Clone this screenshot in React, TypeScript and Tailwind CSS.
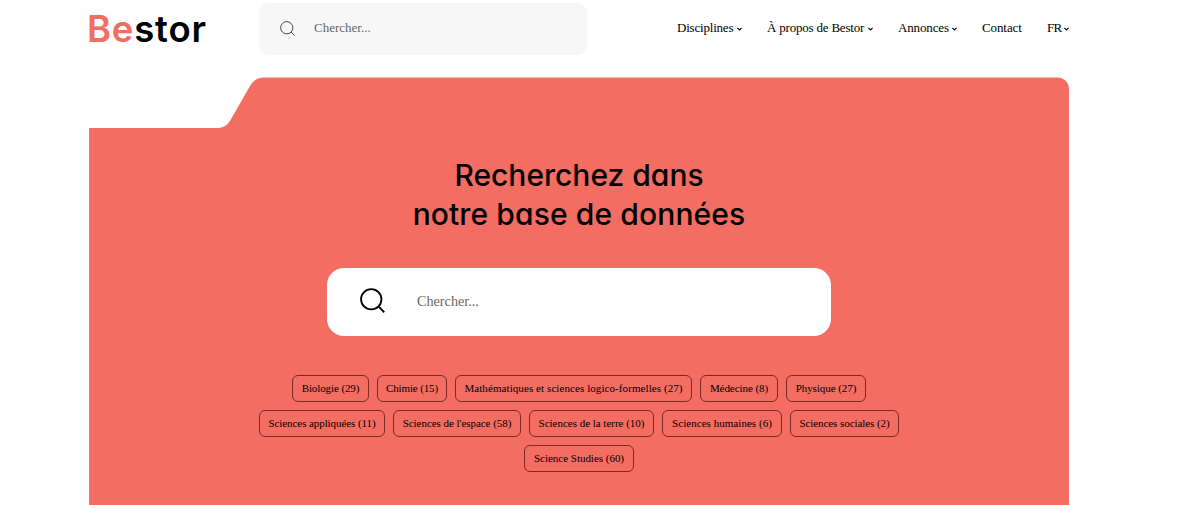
import React, { useState } from "react";

const navItems = [
  { label: "Disciplines", width: "w-[90px]", spacing: "tracking-[-0.2px]", gap: "gap-1", hasMenu: true },
  { label: "À propos de Bestor", width: "w-[131px]", spacing: "tracking-[-0.2px]", gap: "gap-1", hasMenu: true },
  { label: "Annonces", width: "w-[84px]", spacing: "tracking-[-0.15px]", gap: "gap-[3px]", hasMenu: true },
  { label: "Contact", width: "w-[65px]", spacing: "tracking-[-0.1px]", gap: "gap-1", hasMenu: false },
  { label: "FR", width: "w-[22px]", spacing: "tracking-[-0.7px]", gap: "gap-[2px]", hasMenu: true },
];

const tagRows = [
  [
    { label: "Biologie (29)", width: "w-[77px]", spacing: "tracking-[-0.1px]" },
    { label: "Chimie (15)", width: "w-[70px]", spacing: "tracking-[-0.15px]" },
    {
      label: "Mathématiques et sciences logico-formelles (27)",
      width: "w-[237px]",
      spacing: "tracking-[0.08px]",
    },
    { label: "Médecine (8)", width: "w-[78px]", spacing: "tracking-[-0.06px]" },
    { label: "Physique (27)", width: "w-[80px]", spacing: "tracking-[-0.06px]" },
  ],
  [
    { label: "Sciences appliquées (11)", width: "w-[126px]", spacing: "tracking-[-0.08px]" },
    { label: "Sciences de l'espace (58)", width: "w-[128px]", spacing: "tracking-[-0.05px]" },
    { label: "Sciences de la terre (10)", width: "w-[125px]", spacing: "tracking-[-0.02px]" },
    { label: "Sciences humaines (6)", width: "w-[120px]", spacing: "tracking-[0.04px]" },
    { label: "Sciences sociales (2)", width: "w-[109px]", spacing: "tracking-[-0.07px]" },
  ],
  [{ label: "Science Studies (60)", width: "w-[110px]", spacing: "tracking-[-0.02px]" }],
];

function SearchIcon({ className, stroke }: { className: string; stroke: number }) {
  return (
    <svg className={className} viewBox="0 0 26 26" fill="none" stroke="currentColor" strokeWidth={stroke}>
      <circle cx="11.7" cy="11.7" r="10.6" />
      <path d="M19.2 19.2L25.2 25.2" />
    </svg>
  );
}

function Chevron() {
  return (
    <svg
      className="mt-px h-[4px] w-[5px] shrink-0"
      viewBox="0 0 5 4"
      fill="none"
      stroke="currentColor"
      strokeWidth="1.1"
    >
      <path d="M0.4 0.8L2.5 2.9L4.6 0.8" />
    </svg>
  );
}

export default function App() {
  const [navSearch, setNavSearch] = useState("");
  const [search, setSearch] = useState("");

  return (
    <div className="h-[505px] overflow-hidden bg-white text-black font-['Liberation_Serif',serif]">
      <div className="ml-[89px] w-[980px]">
        <header className="flex h-[77px]">
          <div className="-ml-[2px] w-[172px] pt-[7px] whitespace-nowrap font-['Inter',sans-serif] font-[560] text-[36.5px] leading-[44px] tracking-[0.8px]">
            <span className="text-[#f46d62]">Be</span>stor
          </div>
          <div className="mt-[3px] flex h-[52px] w-[328px] items-center rounded-[9px] bg-[#f7f7f7] pl-[21px]">
            <SearchIcon className="mb-[2px] size-[15px] text-[#444]" stroke={1.7} />
            <input
              type="text"
              placeholder="Chercher..."
              className="mb-[2px] ml-[19px] w-[240px] bg-transparent text-[13px] leading-4 outline-none placeholder:text-[#666]"
              value={navSearch}
              onChange={(e) => setNavSearch(e.target.value)}
            />
          </div>
          <nav className="ml-[90px] flex h-[56px] items-center text-[13px]">
            {navItems.map((item) => (
              <a
                key={item.label}
                className={`${item.width} ${item.gap} flex shrink-0 items-center whitespace-nowrap`}
              >
                <span className={item.spacing}>{item.label}</span>
                {item.hasMenu && <Chevron />}
              </a>
            ))}
          </nav>
        </header>

        <main>
          {/* Folder tab on top of the panel */}
          <svg className="block h-[51px] w-[980px]" viewBox="0 0 980 51" fill="#f46d62">
            <path d="M0 50.9H129C135 50.9 138.500 48 141.500 43L161 9C164.500 3.500 168 0.5 175 0.5H968.500C975 0.5 980 5.500 980 12V51H0Z" />
          </svg>

          <section className="flex h-[377px] flex-col items-center bg-[#f46d62]">
            <h1 className="mt-[28px] text-center font-['Inter',sans-serif] text-[30px] font-medium leading-[39px] [font-feature-settings:'cv11']">
              <span>Recherchez dans</span>
              <br />
              <span className="tracking-[0.12px]">notre base de données</span>
            </h1>
            <div className="mt-[34px] flex h-[68px] w-[504px] items-center rounded-[17px] bg-white pl-[33px]">
              <SearchIcon className="mb-[3px] size-[25px]" stroke={1.9} />
              <input
                type="text"
                placeholder="Chercher..."
                className="mb-[2px] ml-[32px] w-[360px] bg-transparent text-[14.2px] leading-5 outline-none placeholder:text-[#666]"
                value={search}
                onChange={(e) => setSearch(e.target.value)}
              />
            </div>
            <div className="mt-[39px] flex flex-col items-center gap-2">
              {tagRows.map((row, i) => (
                <div key={i} className="flex gap-2">
                  {row.map((tag) => (
                    <a
                      key={tag.label}
                      className={`${tag.width} ${tag.spacing} flex h-[27px] items-center justify-center whitespace-nowrap rounded-[6px] border border-[#7d2a25] text-[11px]`}
                    >
                      {tag.label}
                    </a>
                  ))}
                </div>
              ))}
            </div>
          </section>
        </main>
      </div>
    </div>
  );
}
